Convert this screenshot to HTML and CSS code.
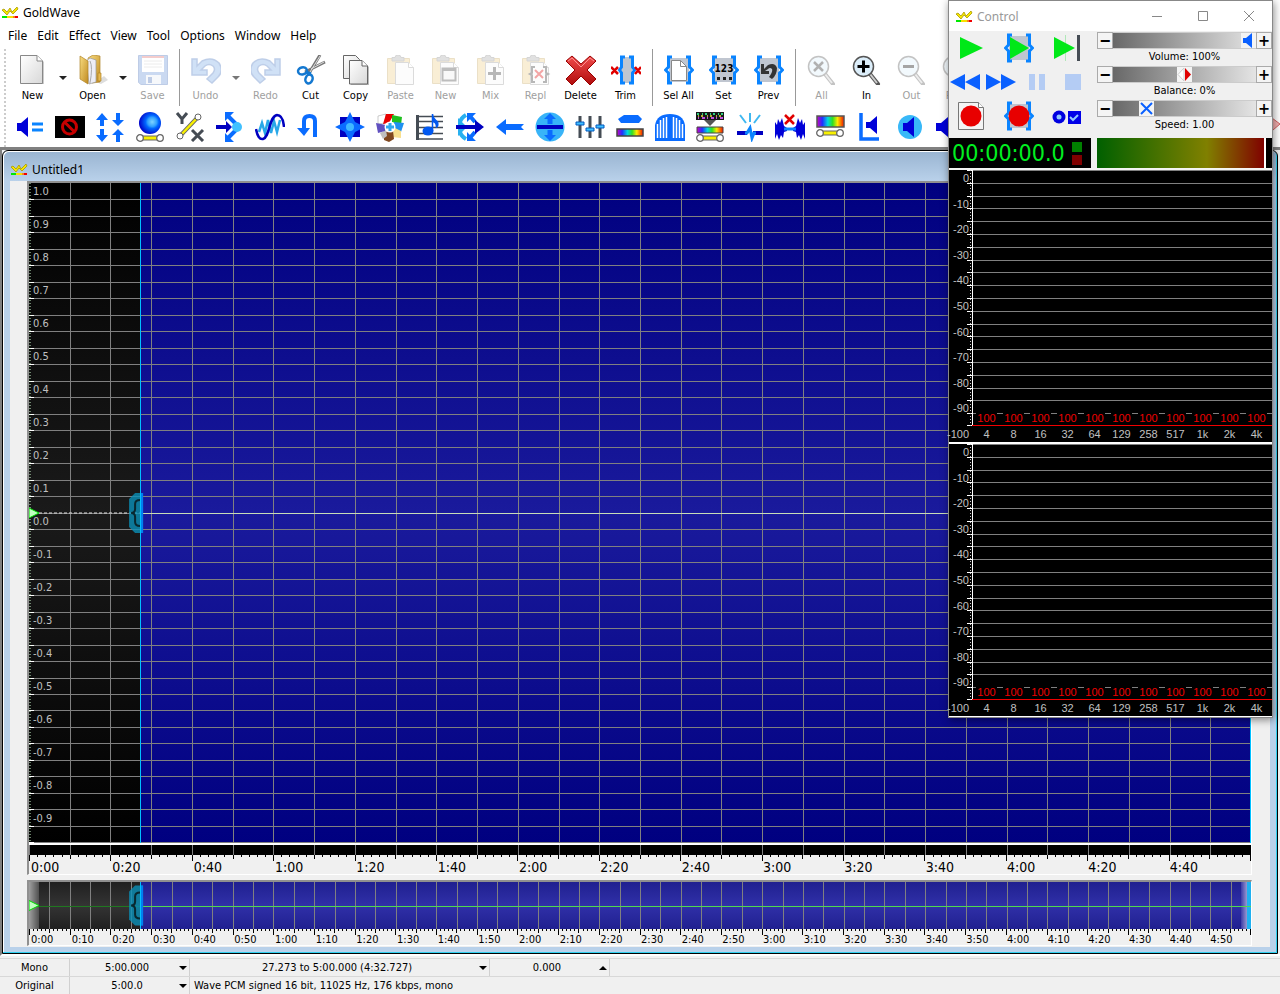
FILE: index.html
```html
<!DOCTYPE html>
<html lang="en">

<head>
    <meta charset="UTF-8">
    <meta name="viewport" content="width=device-width, initial-scale=1.0">
    <title>GoldWave</title>
    <link rel="stylesheet" href="styles.css">
</head>

<body>
    <!-- shared shapes -->
    <svg class="defs" width="0" height="0" aria-hidden="true">
        <defs>
            <linearGradient id="gPage" x1="0" y1="0" x2="1" y2="1">
                <stop offset="0" stop-color="#fff" />
                <stop offset="1" stop-color="#d8d8d8" />
            </linearGradient>
            <linearGradient id="gFolder" x1="0" y1="0" x2="1" y2="1">
                <stop offset="0" stop-color="#f8dc80" />
                <stop offset="1" stop-color="#c08a20" />
            </linearGradient>
            <linearGradient id="gRed" x1="0" y1="0" x2="0" y2="1">
                <stop offset="0" stop-color="#f04c4c" />
                <stop offset="1" stop-color="#b00c0c" />
            </linearGradient>
            <linearGradient id="gRainbow">
                <stop offset="0" stop-color="#d000c0" />
                <stop offset=".2" stop-color="#2030ff" />
                <stop offset=".4" stop-color="#00d8e0" />
                <stop offset=".58" stop-color="#30e020" />
                <stop offset=".76" stop-color="#ffe800" />
                <stop offset="1" stop-color="#f01000" />
            </linearGradient>
            <radialGradient id="gBall" cx=".6" cy=".45" r=".6">
                <stop offset="0" stop-color="#7fd4ff" />
                <stop offset=".35" stop-color="#30a0ff" />
                <stop offset=".5" stop-color="#0068ff" />
                <stop offset="1" stop-color="#0000c8" />
            </radialGradient>
            <linearGradient id="gWave" x1="0" y1="0" x2="0" y2="1">
                <stop offset="0" stop-color="#000080" />
                <stop offset=".5" stop-color="#1a1a9c" />
                <stop offset="1" stop-color="#000080" />
            </linearGradient>
            <linearGradient id="gIdle" x1="0" y1="0" x2="0" y2="1">
                <stop offset="0" stop-color="#000" />
                <stop offset=".5" stop-color="#1a1a1a" />
                <stop offset="1" stop-color="#000" />
            </linearGradient>
            <linearGradient id="gWaveMini" x1="0" y1="0" x2="0" y2="1">
                <stop offset="0" stop-color="#202090" />
                <stop offset=".5" stop-color="#3030a8" />
                <stop offset="1" stop-color="#202090" />
            </linearGradient>
            <linearGradient id="gIdleMini" x1="0" y1="0" x2="0" y2="1">
                <stop offset="0" stop-color="#202020" />
                <stop offset=".5" stop-color="#343434" />
                <stop offset="1" stop-color="#202020" />
            </linearGradient>
            <linearGradient id="gFadeLeft">
                <stop offset="0" stop-color="#a0a0a0" />
                <stop offset="1" stop-color="#505050" />
            </linearGradient>
            <linearGradient id="gFadeRight">
                <stop offset="0" stop-color="#3c3ca8" />
                <stop offset="1" stop-color="#a8a8d8" />
            </linearGradient>
        </defs>
        <symbol id="logo" viewBox="0 0 17 13">
            <path d="M0 4L2 3L5 6L8 2L10 6L15 1L16 3L11 8L8 5L5 9Z" fill="#f8e800" stroke="#a89800" stroke-width=".8" />
            <path d="M0 10h5v2H0z" fill="#00e800" />
            <path d="M5 10h6v2H5z" fill="#f8e000" />
            <path d="M11 10h2v2h-2z" fill="#f88020" />
            <path d="M13 10h3v2h-3z" fill="#f00000" />
        </symbol>
        <symbol id="braces" viewBox="0 0 30 30">
            <path d="M5 3h20v24H5z" fill="#c0c6d0" />
            <path d="M8 2H4.500V12L1.500 15L4.500 18V28H8M22 2h3.500V12l3 3l-3 3V28H22" fill="none" stroke="#0a84ff" stroke-width="3" />
        </symbol>
        <symbol id="page" viewBox="0 0 30 30">
            <path d="M3 1h17l6 6v22H3z" fill="#ccc" />
            <path d="M2.500 .5H19L24.500 6V28.500H2.500z" fill="url(#gPage)" stroke="#888" />
            <path d="M19 .5V6h5.500" fill="#fff" stroke="#888" />
        </symbol>
        <symbol id="clipboard" viewBox="0 0 30 30">
            <path d="M1.500 3.500h22v25h-22z" fill="#f0cf88" stroke="#c8a860" />
            <path d="M6 6V2.500h3Q9 0 12 0t3 2.500h3V6z" fill="#aaa" stroke="#888" />
            <path d="M9.500 7.500h13l5 5v17h-18z" fill="#f8f8f8" stroke="#999" />
            <path d="M22.500 7.500v5h5" fill="#fff" stroke="#999" />
        </symbol>
        <symbol id="lens" viewBox="0 0 30 30">
            <path d="M18 19L26 29" stroke="#555" stroke-width="4" stroke-linecap="round" />
            <path d="M18 19L25 28" stroke="#ccc" stroke-width="2" />
            <circle cx="11.500" cy="11.500" r="10" fill="#dceefa" stroke="#555" stroke-width="1.500" />
        </symbol>
        <symbol id="sliderbar" viewBox="0 0 30 10">
            <path d="M5 5h20" stroke="#666" stroke-width="5" />
            <path d="M5 5h20" stroke="#f8f000" stroke-width="3" />
            <circle cx="5" cy="5" r="3.300" fill="#fff" stroke="#666" stroke-width="1.300" />
            <circle cx="25" cy="5" r="3.300" fill="#fff" stroke="#666" stroke-width="1.300" />
        </symbol>
    </svg>

    <div class="app">
        <header class="titlebar">
            <svg class="logo"><use href="#logo" /></svg>
            <span>GoldWave</span>
        </header>
        <nav class="menu">
            <a href="#file">File</a>
            <a href="#edit">Edit</a>
            <a href="#effect">Effect</a>
            <a href="#view">View</a>
            <a href="#tool">Tool</a>
            <a href="#options">Options</a>
            <a href="#window">Window</a>
            <a href="#help">Help</a>
        </nav>

        <div class="toolbars">
            <div class="toolbar main-tools">
                <button class="tool"><svg viewBox="0 0 30 30"><use href="#page" /></svg>New</button>
                <button class="drop" aria-label="New options"></button>
                <button class="tool">
                    <svg viewBox="0 0 30 30">
                        <path d="M18 27l8-6 4 4-7 4z" fill="#ddd" />
                        <path d="M10 3l5-3 7 1v26l-8 1z" fill="url(#gFolder)" stroke="#b08428" stroke-width=".7" />
                        <path d="M8 6l4-3 6 2v22l-7 2z" fill="#ededf5" stroke="#999" stroke-width=".7" />
                        <path d="M12 6q3 6 0 22" fill="none" stroke="#aaa" />
                        <path d="M2 1l8 5v23l-8-5z" fill="url(#gFolder)" stroke="#b08428" stroke-width=".7" />
                        <path d="M20 18h3v8h-3z" fill="#e8b850" stroke="#b08428" stroke-width=".7" />
                    </svg>Open
                </button>
                <button class="drop" aria-label="Open options"></button>
                <button class="tool" disabled>
                    <svg viewBox="0 0 30 30">
                        <path d="M.5.5h29v29H3l-2.500-2z" fill="#6a94d8" stroke="#4870b8" />
                        <path d="M4 1h22v16H4z" fill="#fff" />
                        <path d="M4 1h22v2H4z" fill="#e07070" />
                        <path d="M6 6h18M6 9h18M6 12h18" stroke="#ccc" />
                        <path d="M8 20h15v9H8z" fill="#e8ecf4" />
                        <path d="M10 22h4v6h-4z" fill="#4870b8" />
                    </svg>Save
                </button>
                <span class="sep"></span>
                <button class="tool" disabled>
                    <svg viewBox="0 0 30 30">
                        <path d="M1 4h5v7l5-5q10-5 17 2q5 8-1 14l-6 6-5-4 6-6q3-4 0-7-4-3-8 0l-4 4h6v5H1z" fill="#7aaae8" stroke="#4876c0" stroke-width="1.500" />
                    </svg>Undo
                </button>
                <button class="drop" aria-label="Undo options" disabled></button>
                <button class="tool" disabled>
                    <svg viewBox="0 0 30 30">
                        <path d="M29 4h-5v7l-5-5q-10-5-17 2q-5 8 1 14l6 6 5-4-6-6q-3-4 0-7 4-3 8 0l4 4h-6v5h15z" fill="#7aaae8" stroke="#4876c0" stroke-width="1.500" />
                    </svg>Redo
                </button>
                <button class="tool">
                    <svg viewBox="0 0 30 30">
                        <path d="M24 0L12 20M29 7L9 17" stroke="#777" stroke-width="3" />
                        <path d="M24 1L14 17M28 7L15 14" stroke="#ddd" />
                        <ellipse cx="6.500" cy="16" rx="4.500" ry="3.500" fill="none" stroke="#1478d0" stroke-width="2.500" transform="rotate(-15 6 16)" />
                        <ellipse cx="13" cy="24" rx="3.500" ry="4.500" fill="none" stroke="#1478d0" stroke-width="2.500" transform="rotate(20 13 24)" />
                        <path d="M10 17l5 2" stroke="#1478d0" stroke-width="3" />
                    </svg>Cut
                </button>
                <button class="tool">
                    <svg viewBox="0 0 30 30">
                        <path d="M2.500.5h12l4 4v19h-16z" fill="url(#gPage)" stroke="#666" />
                        <path d="M10 6h12l6 6v18H10z" fill="#bbb" />
                        <path d="M8.500 5.500h12.500l5.500 5.500v18h-18z" fill="url(#gPage)" stroke="#666" />
                        <path d="M21 5.500V11h5.500" fill="#fff" stroke="#666" />
                    </svg>Copy
                </button>
                <button class="tool" disabled><svg viewBox="0 0 30 30"><use href="#clipboard" /></svg>Paste</button>
                <button class="tool" disabled>
                    <svg viewBox="0 0 30 30"><use href="#clipboard" />
                        <path d="M11.500 13.500h13v12h-13zM11 15h14" fill="#eee" stroke="#444" stroke-width="2" />
                    </svg>New
                </button>
                <button class="tool" disabled>
                    <svg viewBox="0 0 30 30"><use href="#clipboard" />
                        <path d="M18.500 12v13M12 18.500h13" stroke="#333" stroke-width="3" />
                    </svg>Mix
                </button>
                <button class="tool" disabled>
                    <svg viewBox="0 0 30 30"><use href="#clipboard" />
                        <path d="M14 12h-3v6l-2 1 2 1v7h3M22 12h3v6l2 1-2 1v7h-3" fill="none" stroke="#333" stroke-width="2" />
                        <path d="M14 15l8 8M22 15l-8 8" stroke="#d00" stroke-width="2" />
                    </svg>Repl
                </button>
                <button class="tool">
                    <svg viewBox="0 0 30 30">
                        <path d="M0 6l6-5 9 8 9-8 6 5-9 9 9 9-6 6-9-9-9 9-6-6 9-9z" fill="url(#gRed)" stroke="#900" stroke-linejoin="round" />
                        <path d="M2 6l4-3 9 9 9-9 4 3" fill="none" stroke="#ff9090" stroke-width="1" />
                    </svg>Delete
                </button>
                <button class="tool">
                    <svg viewBox="0 0 30 30">
                        <path d="M10 2h11v26H10z" fill="#c0c6d0" />
                        <path d="M14 2h-3.500v10l-2 3 2 3v10H14M18 2h3.500v10l2 3-2 3v10H18" fill="none" stroke="#0a84ff" stroke-width="3" />
                        <path d="M0 12l7 7M7 12l-7 7M24 12l6 7M30 12l-6 7" stroke="#e00000" stroke-width="2.500" />
                    </svg>Trim
                </button>
                <span class="sep"></span>
                <button class="tool">
                    <svg viewBox="0 0 30 30"><use href="#braces" />
                        <path d="M7.500 5.500h9l6 6v14h-15z" fill="#fff" stroke="#888" />
                        <path d="M16.500 5.500v6h6" fill="none" stroke="#888" />
                    </svg>Sel All
                </button>
                <button class="tool">
                    <svg viewBox="0 0 30 30"><use href="#braces" />
                        <text class="digits" x="15" y="17" text-anchor="middle">123</text>
                        <path d="M8 22h3v3H8zM14 22h3v3h-3zM20 22h3v3h-3z" fill="#222" />
                    </svg>Set
                </button>
                <button class="tool">
                    <svg viewBox="0 0 30 30"><use href="#braces" />
                        <path d="M7 9h3v5l4-4q7-3 9 3 0 7-5 11l-3-2q4-5 3-8-2-2-4 0l-3 2h4v3H7z" fill="#333" />
                    </svg>Prev
                </button>
                <span class="sep"></span>
                <button class="tool" disabled>
                    <svg viewBox="0 0 30 30"><use href="#lens" />
                        <path d="M7 7l9 9M16 7l-9 9" stroke="#222" stroke-width="2.500" />
                    </svg>All
                </button>
                <button class="tool">
                    <svg viewBox="0 0 30 30"><use href="#lens" />
                        <path d="M11.500 5.500v12M5.500 11.500h12" stroke="#000" stroke-width="3" />
                    </svg>In
                </button>
                <button class="tool" disabled>
                    <svg viewBox="0 0 30 30"><use href="#lens" />
                        <path d="M6 11.500h11" stroke="#000" stroke-width="3" />
                    </svg>Out
                </button>
                <button class="tool" disabled><svg viewBox="0 0 30 30"><use href="#lens" /></svg>Prev</button>
            </div>

            <div class="toolbar effects">
                <button aria-label="Amplitude"><svg viewBox="0 0 30 30">
                    <path d="M2 11h4l7-6v20l-7-6H2z" fill="#0000d8" />
                    <path d="M17 12h11M17 18h11" stroke="#0a84ff" stroke-width="3" />
                </svg></button>
                <button aria-label="Censor"><svg viewBox="0 0 30 30">
                    <path d="M0 4h30v22H0z" fill="#000" />
                    <circle cx="14.500" cy="15" r="7" fill="none" stroke="#c80000" stroke-width="3" />
                    <path d="M9.500 10l10 10" stroke="#c80000" stroke-width="3" />
                </svg></button>
                <button aria-label="Compressor"><svg viewBox="0 0 30 30">
                    <path d="M7 1l6 7H9v6H5V8H1zM7 30l6-7H9v-6H5v6H1zM23 14l6-6h-4V1h-4v7h-4zM23 17l6 6h-4v7h-4v-7h-4z" fill="#0a6cff" />
                </svg></button>
                <button aria-label="Doppler"><svg viewBox="0 0 30 30">
                    <circle cx="15" cy="11" r="11" fill="url(#gBall)" />
                    <use href="#sliderbar" x="0" y="21" width="30" height="10" />
                </svg></button>
                <button aria-label="Dynamics"><svg viewBox="0 0 30 30">
                    <path d="M2 1l5 6 5-6M7 6v6M17 18l11 11M28 18L17 29" fill="none" stroke="#454c54" stroke-width="3" />
                    <path d="M5 24L23 5" stroke="#666" stroke-width="4" />
                    <path d="M5 24L23 5" stroke="#f8f000" stroke-width="2.500" />
                    <circle cx="5" cy="24" r="3" fill="#fff" stroke="#666" />
                    <circle cx="23" cy="5" r="3" fill="#fff" stroke="#666" />
                </svg></button>
                <button aria-label="Echo"><svg viewBox="0 0 30 30">
                    <path d="M12 3l10 10M12 27l10-10" stroke="#0a6cff" stroke-width="4" />
                    <path d="M10 0h9l-9 9zM10 30h9l-9-9z" fill="#0a6cff" />
                    <circle cx="22" cy="15" r="5" fill="#40c0ff" />
                    <path d="M1 13h10V9l6 6-6 6v-4H1z" fill="#0000c0" />
                </svg></button>
                <button aria-label="Filter"><svg viewBox="0 0 30 30">
                    <path d="M4 20l3-9 3 10 3-13 3 13 3-12 3 11 3-12" fill="none" stroke="#28a8e8" stroke-width="2.500" />
                    <path d="M1 17Q3 28 8 27C15 25 14 4 22 3q6 0 7 12" fill="none" stroke="#0000c0" stroke-width="2.500" />
                </svg></button>
                <button aria-label="Reverse"><svg viewBox="0 0 30 30">
                    <path d="M9 19V9q0-5 5.500-5T20 9v16" fill="none" stroke="#0a6cff" stroke-width="4" />
                    <path d="M2 16h13l-6 8z" fill="#0a6cff" />
                </svg></button>
                <button aria-label="Interpolate"><svg viewBox="0 0 30 30">
                    <path d="M5 5h20v20H5z" fill="#0000c0" />
                    <path d="M15 0l5 10 10 5-10 5-5 10-5-10-10-5 10-5z" fill="#0a6cff" />
                    <circle cx="15" cy="15" r="4" fill="#40b8ff" />
                </svg></button>
                <button aria-label="Mechanize"><svg viewBox="0 0 30 30">
                    <path d="M3 4l8-2-1 9-7 1z" fill="#fff" stroke="#aaa" stroke-width=".6" />
                    <path d="M11 2h8l-5 9-6 1z" fill="#e80000" />
                    <path d="M17 3l10 2-1 8-9-3z" fill="#20c020" />
                    <path d="M19 10l10 1-3 9-7-4z" fill="#2090f0" />
                    <path d="M20 16l6 3v7l-9-1-1-6z" fill="#f8e090" />
                    <path d="M9 20l9-1 1 8-5 3-5-2z" fill="#804820" />
                    <path d="M5 21l6-3 1 6-4 3z" fill="#c0c0c0" />
                    <path d="M1 11l10 2-1 6-7 2z" fill="#6050c0" />
                    <circle cx="15" cy="15" r="5.500" fill="#fff" />
                    <path d="M15 11v8M11 15h8" stroke="#30a8f0" stroke-width="3" />
                </svg></button>
                <button aria-label="Pitch"><svg viewBox="0 0 30 30">
                    <path d="M4 4.500h24M4 9.500h24M4 15.500h24M4 21.500h24M4 27h24" stroke="#454c54" stroke-width="1.500" />
                    <path d="M2.500 3v25" stroke="#454c54" stroke-width="3" />
                    <ellipse cx="13" cy="19" rx="5.500" ry="4.500" fill="#0058f0" />
                    <path d="M17.500 19V2q0 4 5 8 1 4-1 5 0-5-4-6" fill="#0058f0" stroke="#0058f0" stroke-width="1.500" />
                </svg></button>
                <button aria-label="Time offset"><svg viewBox="0 0 30 30">
                    <path d="M5 10q1-4 6-7M5 20q1 4 6 7" fill="none" stroke="#28b0f0" stroke-width="4" />
                    <path d="M3 6l7 7H3zM3 24l7-7H3z" fill="#28b0f0" />
                    <path d="M14 3l6 7M14 27l6-7" stroke="#0a6cff" stroke-width="4" />
                    <path d="M12 1h9l-9 9zM12 29h9l-9-9z" fill="#0a6cff" />
                    <path d="M1 13h19V8l9 7-9 7v-5H1z" fill="#0000c0" />
                </svg></button>
                <button aria-label="Backward"><svg viewBox="0 0 30 30">
                    <path d="M1 15l10-8v5h18l-3 3 3 3H11v5z" fill="#0a6cff" />
                </svg></button>
                <button aria-label="Offset"><svg viewBox="0 0 30 30">
                    <circle cx="15" cy="15" r="14.500" fill="#38b4f8" />
                    <path d="M15 1l6 6h-3.500v5h-5V7H9zM15 29l6-6h-3.500v-5h-5v5H9z" fill="#0a6cff" />
                    <path d="M2 13h26v4H2z" fill="#0000c0" />
                </svg></button>
                <button aria-label="Equalizer"><svg viewBox="0 0 30 30">
                    <path d="M5 4v22M15 4v22M25 4v22" stroke="#454c54" stroke-width="3" />
                    <path d="M1 10h8v3H1zM11 16h8v3h-8zM21 13h8v3h-8z" fill="#40c0ff" stroke="#0058c0" />
                </svg></button>
                <button aria-label="Parametric"><svg viewBox="0 0 30 30">
                    <path d="M9 3h14l4 4-3 4H6L3 7z" fill="#0a6cff" />
                    <path d="M2 17h26v7H2z" fill="url(#gRainbow)" stroke="#444" stroke-width="1.500" />
                </svg></button>
                <button aria-label="Noise gate"><svg viewBox="0 0 30 30">
                    <path d="M0 29V13Q2 2 15 2t15 11v16z" fill="#0a6cff" />
                    <path d="M2.500 26V12M5.500 26V8M8.500 26V6M11.500 26V5M18.500 26V5M21.500 26V6M24.500 26V8M27.500 26V12" stroke="#fff" stroke-width="1.500" />
                </svg></button>
                <button aria-label="Noise reduction"><svg viewBox="0 0 30 30">
                    <path d="M1 0h28v8H1z" fill="#181818" />
                    <path d="M2 2h27" stroke="#30d080" stroke-width="2" stroke-dasharray="2 3 1 2" />
                    <path d="M3 4h26" stroke="#e8e040" stroke-width="1.500" stroke-dasharray="1 2 2 4" />
                    <path d="M3 6h26" stroke="#c050e0" stroke-width="2" stroke-dasharray="1 3 3 2" />
                    <path d="M9 8h12l-6 6z" fill="#555" />
                    <path d="M2 15h26v6H2z" fill="url(#gRainbow)" stroke="#444" />
                    <use href="#sliderbar" x="0" y="21" width="30" height="10" />
                </svg></button>
                <button aria-label="Pop and click"><svg viewBox="0 0 30 30">
                    <path d="M15 1v9M5 3l6 8M25 3l-6 8" stroke="#40b8f0" stroke-width="2" />
                    <path d="M2 21h10M18 21h10" stroke="#0000c0" stroke-width="4" />
                    <path d="M10 21h2l3-5 2 10 2-5h2" fill="none" stroke="#0a84ff" stroke-width="3" />
                </svg></button>
                <button aria-label="Silence reduction"><svg viewBox="0 0 30 30">
                    <path d="M0 10l2 3 1-6 2 4 2-5 2 8 3 2v3l-3 1-1 6-2-3-2 5-2-6-2 5zM30 10l-2 3-1-6-2 4-2-5-2 8-3 2v3l3 1 1 6 2-3 2 5 2-6 2 5z" fill="#0000d8" />
                    <path d="M9 17h12" stroke="#0a84ff" stroke-width="3" />
                    <path d="M10 3l9 9M19 3l-9 9" stroke="#e00000" stroke-width="2.500" />
                </svg></button>
                <button aria-label="Spectrum filter"><svg viewBox="0 0 30 30">
                    <path d="M2 4h27v11H2z" fill="url(#gRainbow)" stroke="#555" stroke-width="1.500" />
                    <use href="#sliderbar" x="0" y="16" width="30" height="10" />
                </svg></button>
                <button aria-label="Auto gain"><svg viewBox="0 0 30 30">
                    <path d="M6 1v26h18" fill="none" stroke="#0a6cff" stroke-width="3.500" />
                    <path d="M11 10h4l7-6v18l-7-6h-4z" fill="#0000d8" />
                </svg></button>
                <button aria-label="Match volume"><svg viewBox="0 0 30 30">
                    <circle cx="15" cy="15" r="12" fill="#38b8f8" />
                    <path d="M8 11h4l7-6v20l-7-6H8z" fill="#0000d8" />
                </svg></button>
                <button aria-label="Maximize volume"><svg viewBox="0 0 30 30">
                    <path d="M1 11h5l7-6v20l-7-6H1z" fill="#0000d8" />
                </svg></button>
                <button class="last" aria-label="Eraser"><svg viewBox="0 0 30 30">
                    <path d="M8 17L22 6l8 6-14 12z" fill="#f4b0b0" stroke="#d06060" />
                </svg></button>
            </div>
        </div>

        <main class="workspace">
            <section class="document">
                <div class="doc-title">
                    <svg class="logo"><use href="#logo" /></svg>
                    <span>Untitled1</span>
                </div>
                <div class="doc-body">
                    <div class="frame wave-frame">
                        <div class="plot" id="wave">
                            <svg class="layer" id="waveSvg"></svg>
                            <div class="levels" id="levels"></div>
                        </div>
                        <svg class="strip" id="strip"></svg>
                        <svg class="ticks" id="waveTicks"></svg>
                        <div class="times big" id="waveTimes"></div>
                    </div>
                    <div class="frame">
                        <svg class="overview" id="overview"></svg>
                        <svg class="ticks" id="miniTicks"></svg>
                        <div class="times small" id="miniTimes"></div>
                    </div>
                </div>
            </section>
        </main>

        <footer class="status">
            <div class="status-row">
                <span class="cell channel">Mono</span>
                <button class="cell length">5:00.000</button>
                <button class="cell range">27.273 to 5:00.000 (4:32.727)</button>
                <button class="cell length up">0.000</button>
            </div>
            <div class="status-row">
                <span class="cell channel">Original</span>
                <button class="cell length">5:00.0</button>
                <span class="cell format">Wave PCM signed 16 bit, 11025 Hz, 176 kbps, mono</span>
            </div>
        </footer>
    </div>

    <aside class="control">
        <header class="control-title">
            <svg class="logo"><use href="#logo" /></svg>
            <span>Control</span>
            <button aria-label="Minimize"><svg viewBox="0 0 12 12"><path d="M1 6.500h10" /></svg></button>
            <button aria-label="Maximize"><svg viewBox="0 0 12 12"><path d="M1.500 1.500h9v9h-9z" /></svg></button>
            <button aria-label="Close"><svg viewBox="0 0 12 12"><path d="M1 1l10 10M11 1L1 11" /></svg></button>
        </header>
        <div class="control-top">
            <div class="transport">
                <div class="trio">
                    <button aria-label="Play"><svg viewBox="0 0 30 30"><path d="M4 4l23 11L4 26z" fill="#00e818" /></svg></button>
                    <button aria-label="Play selection"><svg viewBox="0 0 30 30"><use href="#braces" /><path d="M6 4l19 11L6 26z" fill="#00e818" /></svg></button>
                    <button aria-label="Play to finish"><svg viewBox="0 0 30 30"><path d="M13.500 2v26" stroke="#b0e8b8" /><path d="M2 4l21 11L2 26z" fill="#00e818" /><path d="M25 2h3v26h-3z" fill="#454c54" /></svg></button>
                </div>
                <div class="quad">
                    <button aria-label="Rewind"><svg viewBox="0 0 30 30"><path d="M0 15l15-8v16zM15 15l15-8v16z" fill="#0a60ff" /></svg></button>
                    <button aria-label="Fast forward"><svg viewBox="0 0 30 30"><path d="M0 7l15 8-15 8zM15 7l15 8-15 8z" fill="#0a60ff" /></svg></button>
                    <button aria-label="Pause" disabled><svg viewBox="0 0 30 30"><path d="M7 7h6v16H7zM17 7h6v16h-6z" fill="#b4ccf4" /></svg></button>
                    <button aria-label="Stop" disabled><svg viewBox="0 0 30 30"><path d="M7 7h16v16H7z" fill="#b4ccf4" /></svg></button>
                </div>
                <div class="trio">
                    <button aria-label="Record new"><svg viewBox="0 0 30 30"><path d="M2.500 1.500h20l5 5v22h-25z" fill="#f4f4f4" stroke="#777" /><path d="M22.500 1.500v5h5" fill="#fff" stroke="#777" /><circle cx="15" cy="15" r="10.500" fill="#e80000" /></svg></button>
                    <button aria-label="Record selection"><svg viewBox="0 0 30 30"><use href="#braces" /><circle cx="15" cy="15" r="10.500" fill="#e80000" /></svg></button>
                    <button aria-label="Properties"><svg viewBox="0 0 30 30"><circle cx="7" cy="16" r="6.500" fill="#0000e0" /><circle cx="7" cy="16" r="2.500" fill="#90c8ff" /><path d="M16 10h13v13H16z" fill="#0000e8" /><path d="M18 16l3 3 5-5" fill="none" stroke="#90c8ff" stroke-width="2" /></svg></button>
                </div>
            </div>
            <div class="sliders">
                <div class="slider">
                    <button aria-label="Volume down">&minus;</button>
                    <input type="range" class="volume" id="volume" min="0" max="100" value="100">
                    <button aria-label="Volume up">+</button>
                    <label for="volume">Volume: 100%</label>
                </div>
                <div class="slider">
                    <button aria-label="Balance left">&minus;</button>
                    <input type="range" class="balance" id="balance" min="0" max="100" value="50">
                    <button aria-label="Balance right">+</button>
                    <label for="balance">Balance: 0%</label>
                </div>
                <div class="slider">
                    <button aria-label="Speed down">&minus;</button>
                    <input type="range" class="speed" id="speed" min="0" max="100" value="20">
                    <button aria-label="Speed up">+</button>
                    <label for="speed">Speed: 1.00</label>
                </div>
            </div>
        </div>
        <div class="readout">
            <div class="clock">
                <span>00:00:00.0</span>
                <span class="leds"><i class="led on"></i><i class="led off"></i></span>
            </div>
            <div class="meter"></div>
        </div>
        <div class="spectrum"></div>
        <div class="spectrum"></div>
    </aside>

    <script src="script.js"></script>
</body>

</html>
```
FILE: styles.css
```css
* {
    box-sizing: border-box;
}

body {
    margin: 0;
    font-family: 'DejaVu Sans Condensed', 'DejaVu Sans', sans-serif;
    font-size: 11px;
    color: #000;
    background: #fff;
}

button {
    font: inherit;
    color: inherit;
    background: none;
    border: none;
    padding: 0;
}

svg {
    display: block;
}

.defs {
    position: absolute;
}

.logo {
    width: 17px;
    height: 13px;
    flex: none;
}

.app {
    display: flex;
    flex-direction: column;
    height: 100vh;
    min-height: 600px;
    overflow: hidden;
}

.titlebar {
    display: flex;
    align-items: center;
    gap: 4px;
    height: 24px;
    padding-left: 2px;
    font-family: 'Noto Sans', sans-serif;
    font-size: 12px;
}

.menu {
    display: flex;
    gap: 10px;
    height: 25px;
    padding-left: 8px;
    line-height: 24px;
    font-family: 'Noto Sans', sans-serif;
    font-size: 12px;
}

.menu a {
    color: #000;
    text-decoration: none;
}

/* toolbars */

.toolbars {
    height: 98px;
    padding-left: 6px;
    margin-left: 4px;
    border-left: 2px dotted #ccc;
    overflow: hidden;
}

.toolbars .toolbar {
    margin-left: -2px;
}

.toolbar {
    display: flex;
}

.main-tools {
    height: 57px;
}

.tool {
    display: flex;
    flex-direction: column;
    align-items: center;
    gap: 4px;
    width: 45px;
    flex: none;
    padding-top: 6px;
    white-space: nowrap;
}

.tool svg {
    width: 30px;
    height: 30px;
}

.tool:disabled {
    color: #a0a0a0;
}

.tool:disabled svg {
    opacity: 0.35;
}

.digits {
    font-size: 10px;
    font-weight: bold;
}

.drop {
    width: 15px;
    flex: none;
}

.drop::before {
    content: '';
    display: block;
    width: 0;
    margin: auto;
    border: 4px solid transparent;
    border-top-color: #222;
    border-bottom: none;
}

.drop:disabled::before {
    border-top-color: #777;
}

.sep {
    width: 8px;
    flex: none;
    background: linear-gradient(#999, #999) center / 1px 100% no-repeat;
}

.effects {
    padding-top: 6px;
}

.effects button {
    width: 40px;
    flex: none;
    display: flex;
    justify-content: center;
}

.effects svg {
    width: 30px;
    height: 30px;
}

.effects .last {
    margin-left: auto;
    width: 30px;
}

/* document window */

.workspace {
    flex: 1;
    min-height: 0;
    display: flex;
    padding-right: 2px;
    background: #f0f0f0;
    border-top: 3px solid #808080;
    border-left: 2px solid #808080;
    border-bottom: 2px solid #fff;
}

.document {
    flex: 1;
    display: flex;
    flex-direction: column;
    border: 1px solid #000;
    border-radius: 6px 6px 0 0;
    padding: 0 7px 6px;
    background: linear-gradient(#99b4d1, #b9d1ea 30px);
    box-shadow: inset -1px -1px 0 #30d0f0, inset 1px 1px 0 #fff;
}

.doc-title {
    display: flex;
    align-items: center;
    gap: 4px;
    height: 30px;
    padding: 6px 0 0 1px;
    font-family: 'Noto Sans', sans-serif;
    font-size: 12px;
}

.doc-body {
    flex: 1;
    min-height: 0;
    display: flex;
    flex-direction: column;
    gap: 5px;
    padding: 0 18px 1px 17px;
    background: #f0f0f0;
}

.frame {
    display: flex;
    flex-direction: column;
    border: 2px solid #909090;
    border-right: 1px solid #fff;
    border-bottom: 1px solid #fff;
}

.wave-frame {
    flex: 1;
    min-height: 0;
}

.plot {
    flex: 1;
    min-height: 0;
    position: relative;
}

.layer {
    position: absolute;
    width: 100%;
    height: 100%;
}

.levels {
    position: relative;
    height: 100%;
    display: grid;
    grid-auto-rows: 1fr;
    padding-left: 4px;
    color: #c0c0c0;
    line-height: 17px;
}

.strip {
    width: 100%;
    height: 12px;
    background: #000;
    border-top: 2px solid #fff;
}

.ticks {
    width: 100%;
    height: 5px;
    overflow: visible;
}

.overview {
    width: 100%;
    height: 47px;
}

.times {
    display: grid;
    padding-left: 2px;
}

.big {
    grid-template-columns: repeat(15, 1fr);
    height: 14px;
    font-size: 14px;
    line-height: 15px;
}

.small {
    grid-template-columns: repeat(30, 1fr);
    height: 11px;
    line-height: 11px;
}

/* status bar */

.status {
    background: #f0f0f0;
    height: 38px;
    padding-top: 2px;
    display: flex;
    flex-direction: column;
}

.status-row {
    flex: 1;
    display: flex;
    border-top: 1px solid #d8d8d8;
}

.cell {
    display: flex;
    align-items: center;
    justify-content: center;
    border-right: 1px solid #d0d0d0;
}

.channel {
    width: 70px;
}

.length {
    width: 120px;
}

.range {
    width: 300px;
}

.format {
    padding-left: 4px;
    border: none;
}

button.cell {
    display: grid;
    grid-template-columns: 1fr 8px;
    justify-items: center;
    padding: 0 2px 0 5px;
}

button.cell::after {
    content: '';
    border: 4px solid transparent;
    border-top-color: #000;
    border-bottom: none;
}

button.up::after {
    border-top: none;
    border-bottom: 4px solid #000;
}

/* floating control window */

.control {
    position: absolute;
    top: 0;
    right: 7px;
    width: 325px;
    background: #f0f0f0;
    border: 1px solid #888;
    box-shadow: 1px 2px 8px rgba(0, 0, 0, 0.45);
}

.control-title {
    display: flex;
    align-items: center;
    height: 30px;
    padding-left: 7px;
    background: #fff;
    font-family: 'Noto Sans', sans-serif;
    font-size: 12px;
    color: #999;
}

.control-title span {
    flex: 1;
    padding-left: 4px;
}

.control-title button {
    width: 46px;
}

.control-title button svg {
    width: 12px;
    height: 12px;
    margin: auto;
    fill: none;
    stroke: #888;
}

.control-top {
    display: flex;
    justify-content: space-between;
    height: 107px;
}

.transport {
    width: 144px;
    margin-left: -2px;
}

.trio,
.quad {
    display: grid;
    height: 34px;
    align-items: center;
    justify-items: center;
}

.trio {
    grid-template-columns: repeat(3, 1fr);
}

.quad {
    grid-template-columns: repeat(4, 1fr);
}

.transport svg {
    width: 30px;
    height: 30px;
}

.sliders {
    width: 175px;
    padding-top: 1px;
}

.slider {
    display: grid;
    grid-template-columns: 16px 1fr 16px;
    grid-template-rows: 17px 17px;
}

.slider button {
    border: 1px solid #aaa;
    font-size: 16px;
    font-weight: bold;
    line-height: 14px;
    background: #f4f4f4;
}

.slider label {
    grid-column: 1 / 4;
    text-align: center;
    line-height: 15px;
}

.slider input {
    appearance: none;
    width: 100%;
    height: 17px;
    margin: 0;
    background: linear-gradient(90deg, #686868, #e4e4e4);
    border: 1px solid #ccc;
    border-width: 1px 0;
}

.slider input::-webkit-slider-thumb {
    appearance: none;
    width: 15px;
    height: 15px;
    background: #f4f4f4 center no-repeat;
    border: none;
}

.volume::-webkit-slider-thumb {
    background-image: url("data:image/svg+xml,%3Csvg xmlns='http://www.w3.org/2000/svg' width='15' height='15'%3E%3Cpath d='M2 5h3l6-5v15L5 10H2z' fill='%230a60ff'/%3E%3C/svg%3E") !important;
}

.balance::-webkit-slider-thumb {
    background-image: url("data:image/svg+xml,%3Csvg xmlns='http://www.w3.org/2000/svg' width='15' height='15'%3E%3Cpath d='M7 1v13L1 7.500z' fill='%23fff' stroke='%23ccc'/%3E%3Cpath d='M8 1v13l6-6.500z' fill='%23e00000'/%3E%3C/svg%3E") !important;
}

.speed::-webkit-slider-thumb {
    background-image: url("data:image/svg+xml,%3Csvg xmlns='http://www.w3.org/2000/svg' width='15' height='15'%3E%3Cpath d='M2 2l11 11M13 2L2 13' stroke='%230a60ff' stroke-width='2'/%3E%3C/svg%3E") !important;
}

.readout {
    display: flex;
    gap: 6px;
    height: 32px;
    border-bottom: 2px solid #f4f4f4;
}

.clock {
    width: 142px;
    display: flex;
    align-items: center;
    justify-content: space-between;
    padding: 0 9px 0 3px;
    background: #000;
    color: #00f020;
    font-size: 23px;
}

.leds {
    display: grid;
    gap: 3px;
}

.led {
    width: 10px;
    height: 10px;
}

.led.on {
    background: #008000;
}

.led.off {
    background: #800000;
}

.meter {
    flex: 1;
    border-right: 6px solid #000;
    background: linear-gradient(90deg, #006000, #808000 65%, #800000 99%, #fff 99%);
}

.spectrum {
    display: grid;
    grid-template-columns: 23px 1fr;
    grid-template-rows: 256px 16px;
    background: #000;
    color: #c0c0c0;
    font-family: 'Liberation Sans', sans-serif;
    border-bottom: 2px solid #fff;
}

.spectrum:last-child {
    border-bottom-width: 1px;
}

.decibels {
    display: grid;
    grid-auto-rows: 1fr;
    justify-items: end;
    padding-right: 3px;
    line-height: 16px;
}

.floor {
    line-height: 16px;
    margin: 0 3px 0 -2px;
    text-align: right;
}

.bands {
    display: grid;
    grid-template-columns: repeat(11, 1fr);
    padding: 0 2px 0 1px;
    text-align: center;
    line-height: 16px;
}

.chart {
    position: relative;
    display: grid;
    align-items: end;
}

.peaks {
    position: relative;
    color: #f00000;
    line-height: 14px;
    border-bottom: 1px solid #f00000;
}

.peaks span {
    background: #000;
    margin: 0 3px;
}
```
FILE: script.js
```js
const DURATION = 300;
const SEL_START = 27.273;
const selPct = SEL_START / DURATION * 100;

function byId(id) {
    return document.getElementById(id);
}

function clock(sec) {
    return Math.floor(sec / 60) + ':' + String(sec % 60).padStart(2, '0');
}

function vline(pct, y, h, color) {
    return `<rect x="${pct}%" y="${y}" width="1" height="${h}" fill="${color}" shape-rendering="crispEdges"/>`;
}

function hline(pct, x, w, color) {
    return `<rect x="${x}" y="${pct}%" width="${w}" height="1" fill="${color}" shape-rendering="crispEdges"/>`;
}

function spans(list) {
    return list.map(t => `<span>${t}</span>`).join('');
}

// selection bracket handle, origin at the selection start
function bracket() {
    return `<svg x="${selPct}%" y="50%" overflow="visible">
        <path d="M-11 -14L-5 -20H3V20H-5L-11 14Z" fill="#0a90b8" fill-opacity=".8"/>
        <path d="M0 -20h3v40H0z" fill="#0080f0"/>
        <path d="M0 -13q-5 0-5 4v5q0 4-4 4q4 0 4 4v5q0 4 5 4" fill="none" stroke="#082830" stroke-width="2"/>
    </svg>`;
}

function drawPlot(idle, wave, step, rows) {
    let out = `<rect width="100%" height="100%" fill="url(#${idle})"/>`;
    out += `<rect x="${selPct}%" width="${100 - selPct}%" height="100%" fill="url(#${wave})"/>`;
    for (let s = step; s < DURATION; s += step) {
        out += vline(s / DURATION * 100, 0, '100%', '#808080');
    }
    for (let r = 1; r <= rows; r++) {
        out += hline(r / rows * 99.9, 0, '100%', '#808080');
        out += hline(r / rows * 99.9, 0, 5, '#fff');
    }
    return out;
}

function drawEnds() {
    return bracket() + vline(selPct, 0, '100%', '#00c0ff') +
        '<svg y="50%" overflow="visible"><path d="M0 -5L10 0L0 5z" fill="#c0ffc0" stroke="#00e000"/></svg>';
}

function drawTicks(minor, mid, major) {
    let out = '';
    for (let s = 0; s <= DURATION; s += minor) {
        const h = s % major === 0 ? 6 : s % mid === 0 ? 4 : 2;
        out += vline(s / DURATION * 99.92, 0, h, '#000');
    }
    return out;
}

// main view
byId('waveSvg').innerHTML = drawPlot('gIdle', 'gWave', 10, 40) +
    '<line x1="1" x2="1" y1="0" y2="100%" stroke="#d0ffd0" stroke-width="1" stroke-dasharray="1 2"/>' +
    `<line x1="0" x2="${selPct}%" y1="50%" y2="50%" stroke="#e0e0e0" stroke-dasharray="3 2"/>` +
    hline(50, selPct + '%', '100%', '#c8dcb8') + drawEnds() +
    '<svg x="100%" overflow="visible"><rect x="-1" width="1" height="2000" fill="#00c0ff"/></svg>';

const levels = [];
for (let v = 10; v > -10; v--) {
    levels.push((v / 10).toFixed(1));
}
byId('levels').innerHTML = spans(levels);

let strip = '';
for (let s = 0; s < DURATION; s += 10) {
    strip += vline(s / DURATION * 100, 0, 12, '#808080');
}
byId('strip').innerHTML = strip;
byId('waveTicks').innerHTML = drawTicks(2, 10, 20);
byId('waveTimes').innerHTML = spans(Array.from({ length: 15 }, (_, i) => clock(i * 20)));

// overview
byId('overview').innerHTML = drawPlot('gIdleMini', 'gWaveMini', 5, 0) +
    '<rect width="10" height="100%" fill="url(#gFadeLeft)"/>' +
    '<svg x="100%" overflow="visible"><rect x="-10" width="7" height="47" fill="url(#gFadeRight)"/><rect x="-4" width="4" height="47" fill="#20b0f0"/></svg>' +
    hline(50, 0, selPct + '%', '#207820') + hline(50, selPct + '%', '100%', '#50d850') + drawEnds();
byId('miniTicks').innerHTML = drawTicks(1, 5, 10);
byId('miniTimes').innerHTML = spans(Array.from({ length: 30 }, (_, i) => clock(i * 10)));

// spectrum graphs
const bands = ['4', '8', '16', '32', '64', '129', '258', '517', '1k', '2k', '4k'];
document.querySelectorAll('.spectrum').forEach(el => {
    let grid = '';
    for (let i = 0; i < 20; i++) {
        grid += hline(i * 5, 0, '100%', '#808080');
        grid += hline(i * 5, -5, 5, '#fff');
    }
    grid += hline(99.6, -5, 5, '#fff');
    grid += '<line x1=".5" x2=".5" y1="0" y2="100%" stroke="#fff"/>';
    grid += '<line x1="-1.500" x2="-1.500" y1="0" y2="100%" stroke="#ccc" stroke-dasharray="1 2"/>';
    const db = Array.from({ length: 10 }, (_, i) => String(i * -10));
    db[0] = '0';
    el.innerHTML = `<div class="decibels">${spans(db)}</div>
        <div class="chart"><svg class="layer" overflow="visible">${grid}</svg>
        <div class="bands peaks">${spans(bands.map(() => '100'))}</div></div>
        <div class="floor">-100</div><div class="bands">${spans(bands)}</div>`;
});
```
